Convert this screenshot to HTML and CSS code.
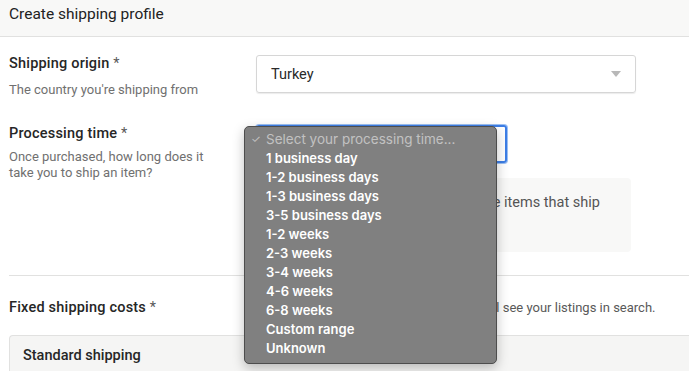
FILE: index.html
```html
<!DOCTYPE html>
<html lang="en">
<head>
  <meta charset="UTF-8">
  <meta name="viewport" content="width=device-width, initial-scale=1.0">
  <title>Create shipping profile</title>
  <link rel="stylesheet" href="styles.css">
</head>
<body>
  <div class="header">Create shipping profile</div>

  <div class="content">
    <div class="row origin-row">
      <div class="label-col">
        <div class="label">Shipping origin <span class="req">*</span></div>
        <div class="hint">The country you're shipping from</div>
      </div>
      <div class="field-col">
        <div class="select">
          <span>Turkey</span>
          <span class="caret"></span>
        </div>
      </div>
    </div>

    <div class="row processing-row">
      <div class="label-col">
        <div class="label">Processing time <span class="req">*</span></div>
        <div class="hint hint-wrap">Once purchased, how long does it take you to ship an item?</div>
      </div>
      <div class="field-col">
        <div class="select select-focus"></div>
        <div class="info-box">Buyers are more likely to purchase items that ship quickly.</div>
      </div>
    </div>

    <div class="divider"></div>

    <div class="row costs-row">
      <div class="label-col">
        <div class="label">Fixed shipping costs <span class="req">*</span></div>
      </div>
      <div class="field-col costs-note">Offer free shipping so buyers in the US will see your listings in search.</div>
    </div>

    <div class="standard-box">Standard shipping</div>
  </div>

  <!-- native select popup, open over the processing time field -->
  <ul class="popup">
    <li class="placeholder"><span class="check">✓</span>Select your processing time...</li>
    <li>1 business day</li>
    <li>1-2 business days</li>
    <li>1-3 business days</li>
    <li>3-5 business days</li>
    <li>1-2 weeks</li>
    <li>2-3 weeks</li>
    <li>3-4 weeks</li>
    <li>4-6 weeks</li>
    <li>6-8 weeks</li>
    <li>Custom range</li>
    <li>Unknown</li>
  </ul>
</body>
</html>
```

FILE: styles.css
```css
body {
  margin: 0;
  font-family: "Roboto", "Liberation Sans", sans-serif;
  color: #222;
  background-color: #fff;
  position: relative;
  overflow: hidden;
}
.header {
  height: 37px;
  line-height: 29px;
  padding-left: 9px;
  font-size: 15.5px;
  color: #222;
  background-color: #f8f8f7;
  border-bottom: 1px solid #e1e1e0;
  box-sizing: border-box;
}
.content {
  padding-left: 9px;
}
.row {
  display: flex;
}
.label-col {
  width: 247px;
  flex-shrink: 0;
}
.field-col {
  flex: 1;
}
.label {
  font-size: 14.5px;
  font-weight: 500;
  color: #262626;
  letter-spacing: 0.2px;
}
.req {
  font-weight: 400;
  color: #595959;
}
.hint {
  font-size: 13px;
  color: #707070;
  line-height: 16px;
  margin-top: 10px;
}
.hint-wrap {
  width: 210px;
  margin-top: 7px;
}
.origin-row {
  padding-top: 18px;
}
.select {
  width: 380px;
  height: 38px;
  box-sizing: border-box;
  border: 1px solid #d6d6d6;
  border-radius: 3px;
  display: flex;
  align-items: center;
  justify-content: space-between;
  padding: 0 14px;
  font-size: 14.5px;
  color: #2a2a2a;
  box-shadow: 0 1px 1px rgba(0,0,0,0.08);
}
.caret {
  width: 0;
  height: 0;
  border-left: 5px solid transparent;
  border-right: 5px solid transparent;
  border-top: 6px solid #b8b8b8;
}
.processing-row {
  padding-top: 27px;
}
.select-focus {
  width: 251px;
  height: 38px;
  border: 2px solid #3d7ee6;
  box-shadow: 0 0 0 1px #9cc0f3;
}
.info-box {
  margin-top: 15px;
  width: 375px;
  height: 74px;
  box-sizing: border-box;
  background-color: #f8f8f7;
  border-radius: 4px;
  padding: 16px 20px 0 24px;
  font-size: 14.5px;
  color: #555;
  line-height: 18px;
}
.divider {
  height: 1px;
  background-color: #e1e1e0;
  margin-top: 23px;
}
.costs-row {
  padding-top: 23px;
  align-items: center;
}
.costs-note {
  font-size: 13px;
  color: #595959;
  white-space: nowrap;
}
.standard-box {
  margin-top: 19px;
  height: 50px;
  background-color: #f5f5f4;
  border: 1px solid #e1e1e0;
  border-right: none;
  border-radius: 4px 0 0 0;
  padding: 11px 0 0 13px;
  box-sizing: border-box;
  font-size: 14.5px;
  font-weight: 500;
  color: #262626;
}
.popup {
  position: absolute;
  left: 244px;
  top: 126px;
  width: 253px;
  margin: 0;
  padding: 3px 0 5px;
  list-style: none;
  box-sizing: border-box;
  background-color: #808080;
  border: 1px solid #4d4d4d;
  border-radius: 5px;
  box-shadow: 0 4px 12px rgba(0,0,0,0.25);
  font-family: "Inter", "Liberation Sans", sans-serif;
  font-size: 13px;
  font-weight: 600;
  color: #fff;
}
.popup li {
  height: 19px;
  line-height: 19px;
  padding-left: 21px;
  position: relative;
}
.popup .placeholder {
  color: #c2c2c2;
  font-weight: 400;
  font-size: 13.5px;
}
.check {
  position: absolute;
  left: 6px;
  font-size: 11px;
}
```
